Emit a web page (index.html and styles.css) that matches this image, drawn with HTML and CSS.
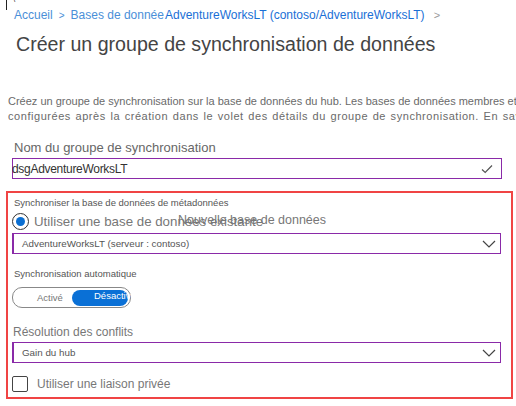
FILE: index.html
```html
<!DOCTYPE html>
<html lang="fr">
<head>
<meta charset="utf-8">
<link rel="stylesheet" href="styles.css">
</head>
<body>
<div class="page">
  <span class="caret-mark"></span><span class="tick-mark">\</span>
  <nav class="crumb">
    <span class="crumb-link">Accueil</span><span class="crumb-sep">&gt;</span><span class="crumb-link">Bases de donnée</span><span class="crumb-cur">AdventureWorksLT (contoso/AdventureWorksLT)</span><span class="crumb-end">&gt;</span>
  </nav>
  <h1 class="title">Créer un groupe de synchronisation de données</h1>
  <p class="desc"><span class="desc-l1">Créez un groupe de synchronisation sur la base de données du hub. Les bases de données membres et</span><br><span class="desc-l2">configurées après la création dans le volet des détails du groupe de synchronisation. En savoir plus</span></p>
  <label class="label-md">Nom du groupe de synchronisation</label>
  <div class="field">
    <span class="field-text">dsgAdventureWorksLT</span>
    <svg class="check" width="12" height="10" viewBox="0 0 12 10"><path d="M1 5.5 L4.2 8.5 L11 1.5" fill="none" stroke="#555" stroke-width="1.2"/></svg>
  </div>
  <section class="box">
    <div class="label-sm">Synchroniser la base de données de métadonnées</div>
    <div class="radio-row">
      <span class="radio"><span class="radio-dot"></span></span>
      <span class="radio-text">Utiliser une base de données existante</span>
      <span class="radio-alt">Nouvelle base de données</span>
    </div>
    <div class="select">
      <span class="select-text">AdventureWorksLT (serveur : contoso)</span>
      <svg class="chev" width="14" height="8" viewBox="0 0 14 8"><path d="M1 1 L7 7 L13 1" fill="none" stroke="#444" stroke-width="1.2"/></svg>
    </div>
    <div class="label-sm gap-lg">Synchronisation automatique</div>
    <div class="toggle">
      <span class="toggle-off">Activé</span>
      <span class="toggle-on">Désactivé</span>
    </div>
    <div class="label-md2">Résolution des conflits</div>
    <div class="select">
      <span class="select-text">Gain du hub</span>
      <svg class="chev" width="14" height="8" viewBox="0 0 14 8"><path d="M1 1 L7 7 L13 1" fill="none" stroke="#444" stroke-width="1.2"/></svg>
    </div>
    <div class="check-row">
      <span class="checkbox"></span>
      <span class="check-text">Utiliser une liaison privée</span>
    </div>
  </section>
</div>
</body>
</html>
```

FILE: styles.css
```css
html, body {
  margin: 0;
  padding: 0;
  background: #fff;
  overflow: hidden;
}
.page {
  position: relative;
  width: 516px;
  height: 406px;
  overflow: hidden;
  font-family: "Liberation Sans", Arial, sans-serif;
  color: #555;
}
.caret-mark {
  position: absolute;
  left: 6px;
  top: 0;
  width: 1px;
  height: 10px;
  background: #222;
}
.tick-mark {
  position: absolute;
  left: 13px;
  top: -5px;
  font-size: 8px;
  color: #333;
}
.crumb {
  height: 30px;
  line-height: 30px;
  padding-left: 14px;
  font-size: 12px;
  white-space: nowrap;
}
.crumb-link { color: #4a8fd8; }
.crumb-sep { color: #4a8fd8; margin: 0 6px; font-size: 10px; }
.crumb-cur { color: #1a6fd6; margin-left: 1px; }
.crumb-end { color: #999; margin-left: 9px; font-size: 11px; }
.title {
  margin: 0;
  padding-left: 16px;
  height: 28px;
  line-height: 28px;
  font-size: 19.6px;
  font-weight: normal;
  color: #444;
  white-space: nowrap;
}
.desc {
  margin: 36px 0 0 0;
  padding-left: 8px;
  font-size: 11px;
  line-height: 15px;
  color: #6a6a6a;
  white-space: nowrap;
}
.desc-l2 {
  letter-spacing: 0.55px;
  word-spacing: 1px;
}
.label-md {
  display: block;
  margin-top: 16px;
  padding-left: 14px;
  font-size: 13px;
  line-height: 16px;
  color: #666;
}
.field {
  margin: 2px 0 0 12px;
  width: 486px;
  height: 19px;
  border: 1.5px solid #8a2aa8;
  display: flex;
  align-items: center;
  justify-content: space-between;
  padding: 0 2px 0 0;
  box-sizing: content-box;
}
.field-text {
  font-size: 12px;
  color: #333;
  margin-left: -1px;
  letter-spacing: -0.3px;
}
.check { margin-right: 6px; }
.box {
  margin: 12px 0 0 6px;
  width: 499px;
  border: 2px solid #f04444;
  padding: 2px 0 5px 4px;
  box-sizing: content-box;
}
.label-sm {
  margin-top: 2px;
  font-size: 9.5px;
  line-height: 12px;
  padding-left: 2px;
  color: #555;
}
.gap-lg { margin-top: 14px; }
.radio-row {
  position: relative;
  margin-top: 3px;
  height: 18px;
  display: flex;
  align-items: center;
  gap: 5px;
}
.radio {
  width: 15px;
  height: 15px;
  border: 1px solid #333;
  border-radius: 50%;
  display: flex;
  align-items: center;
  justify-content: center;
}
.radio-dot {
  width: 9px;
  height: 9px;
  border-radius: 50%;
  background: #0a6ed1;
}
.radio-text {
  font-size: 13.3px;
  color: #777;
}
.radio-alt {
  position: absolute;
  left: 166px;
  top: 0;
  font-size: 12.5px;
  color: #777;
  line-height: 16px;
}
.select {
  margin-top: 3px;
  width: 486px;
  height: 19px;
  border: 1.5px solid #8a2aa8;
  border-left-width: 2px;
  display: flex;
  align-items: center;
  justify-content: space-between;
}
.select-text {
  margin-left: 8px;
  font-size: 9.8px;
  color: #555;
}
.chev { margin-right: 4px; }
.toggle {
  margin-top: 7px;
  width: 117px;
  height: 19px;
  border: 1px solid #888;
  border-radius: 10px;
  display: flex;
  align-items: center;
}
.toggle-off {
  width: 59px;
  padding-left: 8px;
  box-sizing: border-box;
  text-align: left;
  font-size: 9.5px;
  color: #777;
  padding-left: 24px;
}
.toggle-on {
  width: 56px;
  height: 16px;
  line-height: 12px;
  border-radius: 8px;
  background: #0a70d6;
  color: #fff;
  font-size: 9.5px;
  padding-left: 22px;
  box-sizing: border-box;
  white-space: nowrap;
}
.label-md2 {
  margin-top: 17px;
  padding-left: 1px;
  font-size: 12px;
  line-height: 14px;
  color: #777;
}
.check-row {
  margin-top: 12px;
  height: 17px;
  display: flex;
  align-items: center;
  gap: 9px;
}
.checkbox {
  width: 14px;
  height: 14px;
  border: 1px solid #444;
  border-radius: 2px;
}
.check-text {
  font-size: 12px;
  color: #777;
}
```
